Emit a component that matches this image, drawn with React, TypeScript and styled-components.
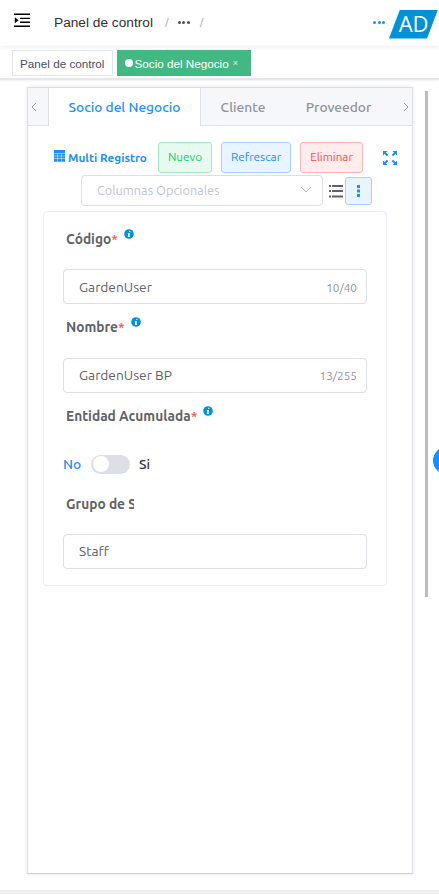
import React from 'react';
import styled, { createGlobalStyle, css } from 'styled-components';

const GlobalStyle = createGlobalStyle`
  *, *::before, *::after { box-sizing: border-box; }
  html, body { margin: 0; padding: 0; overflow: hidden; background: #fff; }
  body { font-family: Ubuntu, "Noto Sans", sans-serif; color: #606266; }
`;

const blue = '#1890ff';

const Page = styled.div`
  position: relative;
  width: 439px;
  height: 894px;
  overflow: hidden;
  display: flex;
  flex-direction: column;
  background: #fff;
`;

const Navbar = styled.header`
  height: 46px;
  flex: none;
  display: flex;
  align-items: center;
  padding-left: 14px;
  box-shadow: 0 1px 4px rgba(0, 21, 41, 0.08);
  font-family: "Liberation Sans", Arial, sans-serif;
`;

const MenuIcon = styled.svg`
  width: 17px;
  height: 15px;
  flex: none;
  margin-top: -5px;
`;

const Crumbs = styled.nav`
  display: flex;
  align-items: center;
  margin-left: 23px;
  font-size: 13.7px;
  line-height: 20px;
  color: #303133;
  margin-top: -1px;
`;

const Slash = styled.span<{ $gap: number }>`
  margin-left: ${(p) => p.$gap}px;
  color: #b4b8c0;
`;

const Dots = styled.span<{ $color: string }>`
  display: inline-flex;
  gap: 1.5px;
  margin-top: -1px;
  color: ${(p) => p.$color};
  i {
    width: 3px;
    height: 3px;
    border-radius: 50%;
    background: currentColor;
  }
`;

const CrumbDots = styled(Dots)`
  margin-left: 9px;
  margin-top: -1px;
`;

const UserArea = styled.div`
  margin-left: auto;
  display: flex;
  align-items: center;
  gap: 4px;
  padding-right: 1px;
`;

const Avatar = styled.div`
  width: 49px;
  height: 29px;
  margin-top: 2px;
  display: flex;
  align-items: center;
  justify-content: center;
  background: #0092d9;
  clip-path: polygon(11px 0, 100% 0, 38px 100%, 0 100%);
  color: #fff;
  font: 22px/27px "Open Sans", sans-serif;
  padding-bottom: 2px;
  letter-spacing: -0.3px;
`;

const TagsBar = styled.div`
  height: 34px;
  flex: none;
  display: flex;
  align-items: flex-start;
  gap: 4px;
  padding: 4px 0 0 12px;
  border-bottom: 2px solid #e6e7ec;
  box-shadow: 0 1px 2px rgba(0, 0, 0, 0.06);
  font-family: "Liberation Sans", Arial, sans-serif;
`;

const Tag = styled.div<{ $active?: boolean }>`
  height: 26px;
  display: flex;
  align-items: center;
  width: ${(p) => (p.$active ? 134 : 101)}px;
  padding: 1px 7px 0;
  border: 1px solid ${(p) => (p.$active ? '#42b983' : '#e3e6ee')};
  background: ${(p) => (p.$active ? '#42b983' : '#fff')};
  color: ${(p) => (p.$active ? '#fff' : '#495060')};
  font-size: 11.7px;
  white-space: nowrap;
`;

const TagDot = styled.i`
  width: 8px;
  height: 8px;
  border-radius: 50%;
  background: #fff;
  margin: -2px 1.5px 0 0;
`;

const TagClose = styled.span`
  margin: -1px 0 0 4px;
  font-size: 9px;
  opacity: 0.8;
`;

const Card = styled.main`
  width: 386px;
  height: 787px;
  margin: 7px 0 0 27px;
  flex: none;
  display: flex;
  flex-direction: column;
  border: 1px solid #dcdfe6;
  border-bottom-color: #cfd1d9;
  box-shadow: 0 0 4px rgba(0, 0, 0, 0.1);
  background: #fff;
`;

const TabRow = styled.div`
  height: 38px;
  flex: none;
  display: flex;
  background: #f5f7fa;
  border-bottom: 1px solid #e1e4eb;
`;

const Arrow = styled.div<{ $side: 'left' | 'right' }>`
  width: 20px;
  display: flex;
  align-items: center;
  justify-content: ${(p) => (p.$side === 'left' ? 'flex-start' : 'flex-end')};
  padding: 1px 3px 0;
`;

const Tab = styled.div<{ $active?: boolean; $width: number }>`
  width: ${(p) => p.$width}px;
  height: 38px;
  text-align: center;
  font-size: 13.72px;
  font-weight: 500;
  line-height: 38px;
  white-space: nowrap;
  color: #909399;
  ${(p) =>
    p.$active &&
    css`
      color: ${blue};
      background: #fff;
      border: solid #dcdfe6;
      border-width: 0 1px;
    `}
`;

const Toolbar = styled.div`
  display: flex;
  align-items: center;
  height: 32px;
  margin: 15px 0 0 26px;
`;

const MultiLink = styled.div`
  display: flex;
  align-items: center;
  gap: 3px;
  width: 94px;
  color: ${blue};
  font-size: 11.76px;
  font-weight: 700;
  white-space: nowrap;
  svg { flex: none; margin-top: -2px; }
`;

const tones = {
  green: ['#e7faf0', '#a1ebc4', '#13ce66'],
  blue: ['#e8f4ff', '#a3d3ff', blue],
  red: ['#ffeded', '#ffb6b6', '#ff4949'],
};

const Button = styled.button<{ $tone: keyof typeof tones; $width: number; $gap?: number }>`
  width: ${(p) => p.$width}px;
  height: 31px;
  margin: 0 0 0 ${(p) => p.$gap || 0}px;
  padding: 0 0 2px;
  display: flex;
  align-items: center;
  justify-content: center;
  border: 1px solid ${(p) => tones[p.$tone][1]};
  border-radius: 3px;
  background: ${(p) => tones[p.$tone][0]};
  color: ${(p) => tones[p.$tone][2]};
  font: 11.76px Ubuntu, "Noto Sans", sans-serif;
`;

const ExpandIcon = styled.svg`
  margin: 2px 0 0 20px;
`;

const ColumnRow = styled.div`
  display: flex;
  align-items: center;
  height: 31px;
  margin: 2px 0 0 53px;
`;

const Select = styled.div`
  width: 242px;
  height: 31px;
  display: flex;
  align-items: center;
  justify-content: space-between;
  padding: 0 10px 1px 15px;
  border: 1px solid #dcdfe6;
  border-radius: 4px;
  font-size: 12.74px;
  color: #c0c4cc;
`;

const ListIcon = styled.svg`
  margin: 0 2px 0 6px;
`;

const MoreButton = styled(Button)`
  height: 28px;
  padding: 0;
`;

const Panel = styled.section`
  width: 344px;
  height: 375px;
  margin: 5px 0 0 15px;
  padding: 12px 19px 0;
  display: flex;
  flex-direction: column;
  border: 1px solid #ebeef5;
  border-radius: 4px;
`;

const Field = styled.div<{ $height: number; $gap?: number }>`
  height: ${(p) => p.$height}px;
  display: flex;
  flex-direction: column;
  gap: ${(p) => p.$gap || 13}px;
  flex: none;
`;

const Label = styled.div<{ $clip?: boolean }>`
  height: 32px;
  margin-left: 3px;
  width: ${(p) => (p.$clip ? '68px' : 'auto')};
  overflow: hidden;
  display: flex;
  flex: none;
  font-size: 13.72px;
  font-weight: 700;
  line-height: 31px;
  white-space: nowrap;
  color: #606266;
  b { color: #ff4949; font-weight: 500; }
  svg { margin: 5px 0 0 6px; flex: none; }
`;

const Input = styled.div<{ $raise?: boolean }>`
  height: 35px;
  flex: none;
  display: flex;
  align-items: center;
  justify-content: space-between;
  padding: 0 9px ${(p) => (p.$raise ? 2 : 0)}px 15px;
  border: 1px solid #dcdfe6;
  border-radius: 4px;
  font-size: 13.72px;
  color: #606266;
`;

const Count = styled.span`
  font-size: 11.76px;
  color: #909399;
  padding-top: 2px;
`;

const SwitchRow = styled.div`
  display: flex;
  align-items: center;
  height: 36px;
  font-size: 13.72px;
  font-weight: 500;
`;

const SwitchLabel = styled.span<{ $active?: boolean }>`
  color: ${(p) => (p.$active ? blue : '#303133')};
`;

const Track = styled.span`
  width: 39px;
  height: 19px;
  margin: 0 9px 0 10px;
  padding: 1.5px 2px;
  border-radius: 10px;
  background: #dcdfe6;
  &::before {
    content: '';
    display: block;
    width: 16px;
    height: 16px;
    border-radius: 50%;
    background: #fff;
  }
`;

const Scrollbar = styled.div`
  position: absolute;
  left: 425px;
  top: 91px;
  width: 3px;
  height: 506px;
  background: #bcbcbc;
`;

const Floating = styled.div`
  position: absolute;
  left: 432.5px;
  top: 447px;
  width: 27px;
  height: 27px;
  border-radius: 50%;
  background: ${blue};
`;

const Footer = styled.footer`
  height: 4px;
  margin-top: auto;
  flex: none;
  background: #f0f0f5;
`;

const Chevron = ({ d, w, h, color = '#909399' }: { d: string; w: number; h: number; color?: string }) => (
  <svg width={w} height={h} fill="none" stroke={color} strokeWidth="1">
    <path d={d} />
  </svg>
);

const Info = () => (
  <svg width="10" height="10" viewBox="0 0 10 10">
    <circle cx="5" cy="5" r="4.8" fill="#0092d9" />
    <path d="M5.3 1.8h1.2L6.3 3H5.1zM3.9 3.9h2.2L5.5 7h.6l-.2.9H3.8L4.4 4.8h-.7z" fill="#fff" />
  </svg>
);

const Ellipsis = () => (<><i /><i /><i /></>);

export default function App() {
  return (
    <>
      <GlobalStyle />
      <Page>
        <Navbar>
          <MenuIcon viewBox="0 0 17 15">
            <path d="M0 1.2h16M6 5.4h10M6 9.2h10M0 13.3h16" stroke="#000" strokeWidth="1.4" />
            <path d="M.8 4.3v6L4.5 7.3z" fill="#000" />
          </MenuIcon>
          <Crumbs>
            <span>Panel de control</span>
            <Slash $gap={12}>/</Slash>
            <CrumbDots $color="#505154"><Ellipsis /></CrumbDots>
            <Slash $gap={10}>/</Slash>
          </Crumbs>
          <UserArea>
            <Dots $color={blue}><Ellipsis /></Dots>
            <Avatar>AD</Avatar>
          </UserArea>
        </Navbar>
        <TagsBar>
          <Tag>Panel de control</Tag>
          <Tag $active><TagDot />Socio del Negocio<TagClose>×</TagClose></Tag>
        </TagsBar>
        <Card>
          <TabRow>
            <Arrow $side="left"><Chevron w={6} h={10} d="M5 1L1 5l4 4" /></Arrow>
            <Tab $active $width={153}>Socio del Negocio</Tab>
            <Tab $width={84}>Cliente</Tab>
            <Tab $width={107}>Proveedor</Tab>
            <Arrow $side="right"><Chevron w={6} h={10} d="M1 1l4 4-4 4" /></Arrow>
          </TabRow>
          <Toolbar>
            <MultiLink>
              <svg width="11" height="12" fill={blue}>
                <path d="M0 0h11v3H0zM0 3.4h3.4v2.4H0zM3.8 3.4h3.4v2.4H3.8zM7.6 3.4H11v2.4H7.6zM0 6.2h3.4v2.4H0zM3.8 6.2h3.4v2.4H3.8zM7.6 6.2H11v2.4H7.6zM0 9h3.4v2.7H0zM3.8 9h3.4v2.7H3.8zM7.6 9H11v2.7H7.6z" />
              </svg>
              Multi Registro
            </MultiLink>
            <Button $tone="green" $width={54} $gap={10}>Nuevo</Button>
            <Button $tone="blue" $width={70} $gap={9}>Refrescar</Button>
            <Button $tone="red" $width={63} $gap={9}>Eliminar</Button>
            <ExpandIcon width="14" height="14" viewBox="0 0 14 14" fill={blue} stroke={blue} strokeWidth="2">
              <path d="M0 0h4.5L0 4.5zM14 0v4.5L9.5 0zM0 14V9.5L4.5 14zM14 14H9.5L14 9.5z" stroke="none" />
              <path d="M1.5 1.5l3.1 3.1M12.5 1.5L9.4 4.6M1.5 12.5l3.1-3.1M12.5 12.5L9.4 9.4" />
            </ExpandIcon>
          </Toolbar>
          <ColumnRow>
            <Select>Columnas Opcionales<Chevron w={12} h={8} color="#b5b8c0" d="M1 1l5 5 5-5" /></Select>
            <ListIcon width="14" height="14" stroke="#606266" strokeWidth="2">
              <path d="M0 2h2M3 2h11M0 7h2M3 7h11M0 12.5h2M3 12.5h11" />
            </ListIcon>
            <MoreButton $tone="blue" $width={27}>
              <svg width="3" height="12" fill={blue}><path d="M0 0h3v3H0zM0 4.5h3v3H0zM0 9h3v3H0z" /></svg>
            </MoreButton>
          </ColumnRow>
          <Panel>
            <Field $height={88}>
              <Label>Código<b>*</b><Info /></Label>
              <Input>GardenUser<Count>10/40</Count></Input>
            </Field>
            <Field $height={89} $gap={14}>
              <Label>Nombre<b>*</b><Info /></Label>
              <Input $raise>GardenUser BP<Count>13/255</Count></Input>
            </Field>
            <Field $height={88}>
              <Label>Entidad Acumulada<b>*</b><Info /></Label>
              <SwitchRow>
                <SwitchLabel $active>No</SwitchLabel>
                <Track />
                <SwitchLabel>Si</SwitchLabel>
              </SwitchRow>
            </Field>
            <Field $height={88}>
              <Label $clip>Grupo de Socio</Label>
              <Input $raise>Staff</Input>
            </Field>
          </Panel>
        </Card>
        <Scrollbar />
        <Floating />
        <Footer />
      </Page>
    </>
  );
}
